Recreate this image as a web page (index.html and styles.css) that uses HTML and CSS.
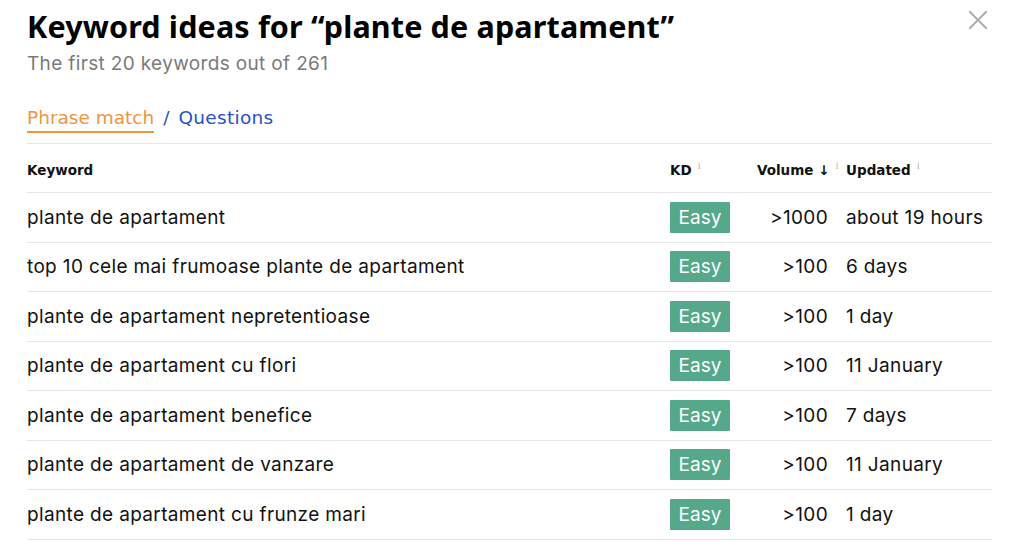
FILE: index.html
```html
<!DOCTYPE html>
<html>
<head>
<meta charset="utf-8">
<link rel="stylesheet" href="styles.css">
</head>
<body>
<div class="modal">
  <div class="head">
    <div class="titles">
      <h1 class="title">Keyword ideas for “plante de apartament”</h1>
      <p class="sub">The first 20 keywords out of 261</p>
    </div>
    <button class="close" aria-label="Close">
      <svg width="20" height="20" viewBox="0 0 20 20"><path d="M2 2 L18 18 M18 2 L2 18" stroke="#adadad" stroke-width="2" stroke-linecap="square" fill="none"/></svg>
    </button>
  </div>
  <div class="tabs">
    <span class="tab active">Phrase match</span>
    <span class="sep">/</span>
    <span class="tab link">Questions</span>
  </div>
  <div class="table">
    <div class="row hdr">
      <div class="c kw">Keyword</div>
      <div class="c kd">KD<sup class="i">i</sup></div>
      <div class="c vol">Volume <span class="arrow">↓</span><sup class="i">i</sup></div>
      <div class="c upd">Updated<sup class="i">i</sup></div>
    </div>
    <div class="row"><div class="c kw">plante de apartament</div><div class="c kd"><span class="badge">Easy</span></div><div class="c vol">&gt;1000</div><div class="c upd">about 19 hours</div></div>
    <div class="row"><div class="c kw">top 10 cele mai frumoase plante de apartament</div><div class="c kd"><span class="badge">Easy</span></div><div class="c vol">&gt;100</div><div class="c upd">6 days</div></div>
    <div class="row"><div class="c kw">plante de apartament nepretentioase</div><div class="c kd"><span class="badge">Easy</span></div><div class="c vol">&gt;100</div><div class="c upd">1 day</div></div>
    <div class="row"><div class="c kw">plante de apartament cu flori</div><div class="c kd"><span class="badge">Easy</span></div><div class="c vol">&gt;100</div><div class="c upd">11 January</div></div>
    <div class="row"><div class="c kw">plante de apartament benefice</div><div class="c kd"><span class="badge">Easy</span></div><div class="c vol">&gt;100</div><div class="c upd">7 days</div></div>
    <div class="row"><div class="c kw">plante de apartament de vanzare</div><div class="c kd"><span class="badge">Easy</span></div><div class="c vol">&gt;100</div><div class="c upd">11 January</div></div>
    <div class="row"><div class="c kw">plante de apartament cu frunze mari</div><div class="c kd"><span class="badge">Easy</span></div><div class="c vol">&gt;100</div><div class="c upd">1 day</div></div>
  </div>
</div>
</body>
</html>
```
FILE: styles.css
```css
* { box-sizing: border-box; }
html, body { margin: 0; padding: 0; background: #fff; }
body { font-family: Inter, "Liberation Sans", sans-serif; color: #111; overflow: hidden; }
.modal { padding: 6px 32px 0 27px; }
.head { display: flex; justify-content: space-between; align-items: flex-start; }
.title { margin: 0; font-family: "Noto Sans", sans-serif; font-weight: 700; font-size: 30.5px; line-height: 40px; color: #000; letter-spacing: 0.15px; }
.sub { margin: 6px 0 0; font-size: 19px; line-height: 24px; color: #7a7a7a; letter-spacing: 0.35px; }
.close { border: 0; background: none; padding: 0; margin: 4px 4px 0 0; width: 20px; height: 20px; display: block; }
.close svg { display: block; }
.tabs { margin-top: 29px; display: flex; align-items: baseline; gap: 9px; font-family: "DejaVu Sans", sans-serif; font-size: 18.5px; line-height: 26px; }
.tab.active { color: #f0953f; border-bottom: 2px solid #f0953f; padding-bottom: 0; }
.sep { color: #2c50c7; }
.tab.link { color: #2c50c7; letter-spacing: 0.3px; }
.table { margin-top: 10px; border-top: 1px solid #e6e6e6; }
.row { display: grid; grid-template-columns: 643px 87px 89px 1fr; align-items: center; height: 49.5px; border-bottom: 1px solid #e6e6e6; font-size: 19px; letter-spacing: 0.35px; }
.row.hdr { height: 49px; padding-top: 4px; font-family: "DejaVu Sans", sans-serif; font-weight: 700; font-size: 13.5px; letter-spacing: 0; }
.c { white-space: nowrap; }
.vol { text-align: right; padding-right: 18px; }
.hdr .vol { text-align: left; padding-right: 0; }
.i { font-family: "Liberation Serif", serif; font-weight: 400; color: #b5b5b5; font-size: 11px; margin-left: 6px; vertical-align: 6px; line-height: 0; }
.arrow { font-weight: 700; }
.badge { display: inline-block; width: 60px; height: 31px; line-height: 31px; text-align: center; background: #55a88a; color: #fff; font-size: 19px; letter-spacing: 0; border-radius: 1px; }
```
